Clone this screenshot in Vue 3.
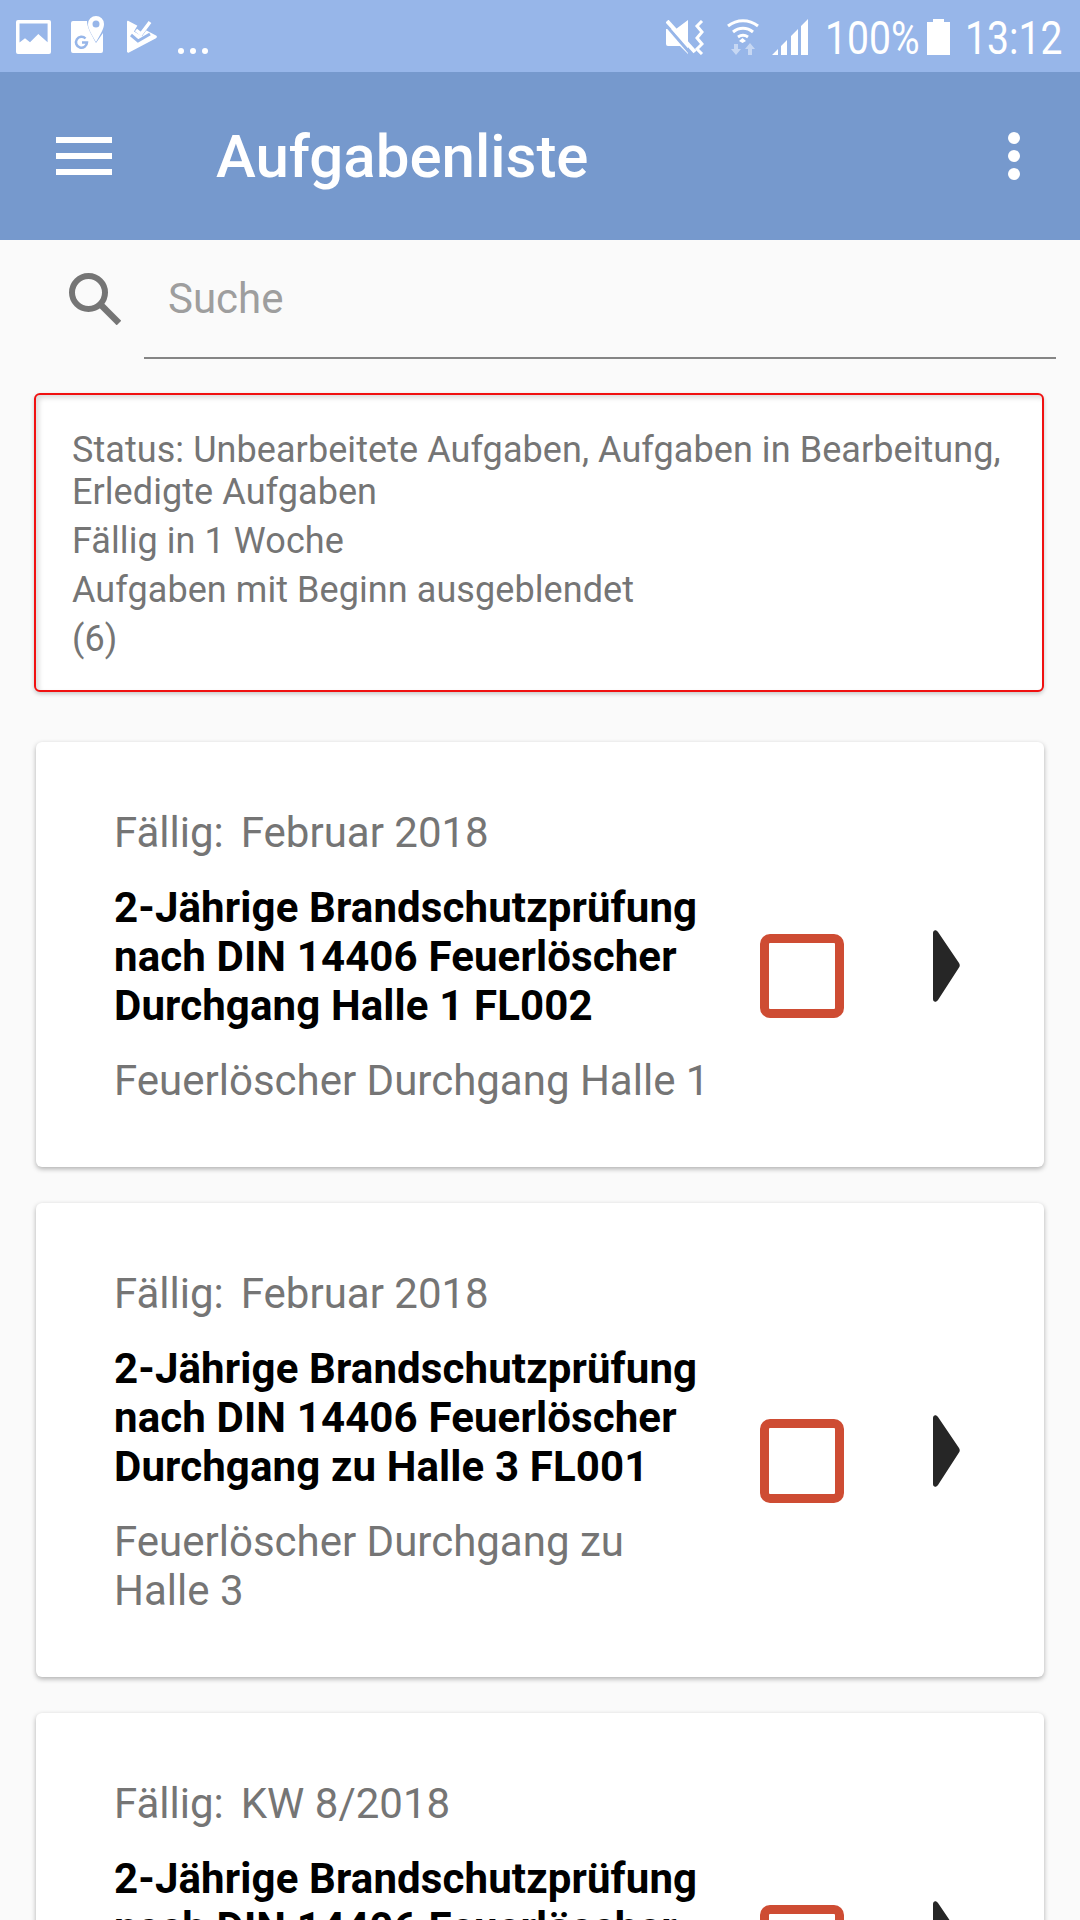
<script setup>
const notice = [
  'Status: Unbearbeitete Aufgaben, Aufgaben in Bearbeitung, Erledigte Aufgaben',
  'Fällig in 1 Woche',
  'Aufgaben mit Beginn ausgeblendet',
  '(6)',
]

const tasks = [
  {
    due: 'Februar 2018',
    title: '2-Jährige Brandschutzprüfung nach DIN 14406 Feuerlöscher Durchgang Halle 1 FL002',
    place: 'Feuerlöscher Durchgang Halle 1',
  },
  {
    due: 'Februar 2018',
    title: '2-Jährige Brandschutzprüfung nach DIN 14406 Feuerlöscher Durchgang zu Halle 3 FL001',
    place: 'Feuerlöscher Durchgang zu Halle 3',
  },
  {
    due: 'KW 8/2018',
    title: '2-Jährige Brandschutzprüfung nach DIN 14406 Feuerlöscher Durchgang Halle 2 FL003',
    place: 'Feuerlöscher Durchgang Halle 2',
  },
]
</script>

<template>
  <div class="screen">
    <div class="statusbar">
      <div class="status-left">
        <svg class="ic-image" width="35" height="34" viewBox="0 0 35 34">
          <path fill="#fff" fill-rule="evenodd" d="M2 0h31a2 2 0 0 1 2 2v30a2 2 0 0 1-2 2H2a2 2 0 0 1-2-2V2a2 2 0 0 1 2-2zm1.500 3.500v19L9 18.300l5 4L22.300 14l9.300 8.300V3.500z" />
        </svg>
        <svg class="ic-maps" width="34" height="37" viewBox="0 0 34 37">
          <path fill="#fff" d="M2 5h14c0 6 4 13 9 22l7-10v18a2 2 0 0 1-2 2H2a2 2 0 0 1-2-2V7a2 2 0 0 1 2-2z" />
          <path fill="#fff" fill-rule="evenodd" d="M25 0a8 8 0 0 1 8 8c0 5-4 11-8 18-4-7-8-13-8-18a8 8 0 0 1 8-8zm0 4.500a3.500 3.500 0 1 0 0 7 3.500 3.500 0 0 0 0-7z" />
          <path fill="none" stroke="#97b6e9" stroke-width="2.500" d="M14.500 22.500a5.500 5.500 0 1 0 1.500 4h-5" />
        </svg>
        <svg class="ic-tasks" width="30" height="33" viewBox="0 0 30 33">
          <path fill="#fff" d="M1.500 1L29 15.500c1.200.7 1.200 2 0 2.700L2 32.500c-1 .5-2 0-2-1V2c0-1 .7-1.500 1.500-1z" />
          <path fill="none" stroke="#97b6e9" stroke-width="3" d="M4 15l7 6 12-7" />
          <path fill="none" stroke="#97b6e9" stroke-width="8" d="M9 8l5 3 8-11" />
          <path fill="none" stroke="#fff" stroke-width="3.500" d="M9 10l5 4 9-12" />
        </svg>
        <span class="more-dots"><i></i><i></i><i></i></span>
      </div>
      <div class="status-right">
        <svg class="ic-mute" width="38" height="35" viewBox="0 0 38 35">
          <path fill="#fff" d="M0 9h10L22 0v34l-8-8H2a2 2 0 0 1-2-2z" />
          <path stroke="#97b6e9" stroke-width="3" d="M-2 3l26 30" />
          <path stroke="#fff" stroke-width="4" d="M1 1l28 31" />
          <path fill="none" stroke="#fff" stroke-width="3" d="M36 1l-5 5 5 6-5 6 5 6-5 5 5 5" />
        </svg>
        <svg class="ic-wifi" width="32" height="37" viewBox="0 0 32 37">
          <path fill="none" stroke="#fff" stroke-width="3" d="M1 8c9-7 21-7 30 0M6 14c6-5 14-5 20 0M11 19c3-2 7-2 10 0" />
          <path fill="#fff" d="M15.500 20l3.500 3-3.500 2-3.500-2z" />
          <path fill="#fff" opacity=".45" d="M7 26v5H4l5 6 5-6h-3v-5zM21 37v-6h-3l5-6 5 6h-3v6z" />
        </svg>
        <svg class="ic-signal" width="36" height="36" viewBox="0 0 36 36">
          <path fill="#fff" d="M0 36l6-6v6zM9 36V27l6-6v15zM19 36V17l7-7v26zM29 36V7l7-7v36z" />
        </svg>
        <span class="sb-text pct">100%</span>
        <svg class="ic-battery" width="23" height="36" viewBox="0 0 23 36">
          <path fill="#fff" d="M6 0h11v3h6v33H0V3h6z" />
        </svg>
        <span class="sb-text time">13:12</span>
      </div>
    </div>

    <header class="toolbar">
      <div class="menu-btn"><i></i><i></i><i></i></div>
      <h1 class="title">Aufgabenliste</h1>
      <div class="overflow-btn"><i></i><i></i><i></i></div>
    </header>

    <div class="search">
      <svg class="search-icon" width="52" height="52" viewBox="0 0 52 52">
        <circle cx="19.500" cy="19.500" r="16.500" fill="none" stroke="#757575" stroke-width="6" />
        <path stroke="#757575" stroke-width="6.500" d="M31 31l19 19" />
      </svg>
      <div class="search-input">Suche</div>
    </div>

    <div class="notice">
      <p v-for="line in notice" :key="line">{{ line }}</p>
    </div>

    <div class="cards">
      <div v-for="task in tasks" :key="task.title" class="card">
        <div class="card-body">
          <div class="due">Fällig:<span class="due-value">{{ task.due }}</span></div>
          <div class="task-title">{{ task.title }}</div>
          <div class="place">{{ task.place }}</div>
        </div>
        <div class="checkbox"></div>
        <svg class="arrow" width="27" height="72" viewBox="0 0 27 72">
          <path fill="#262626" d="M0 3c0-3 3-4 5-1l21 31c1 1.500 1 3 0 4.500L5 70c-2 3-5 2-5-1z" />
        </svg>
      </div>
    </div>
  </div>
</template>

<style>
html,
body {
  margin: 0;
  background: #fafafa;
}
</style>

<style scoped>
.screen {
  width: 1080px;
  height: 1920px;
  overflow: hidden;
  background: #fafafa;
  font-family: Roboto, "Liberation Sans", sans-serif;
}

.statusbar {
  height: 72px;
  background: #97b6e9;
  display: flex;
  justify-content: space-between;
  padding: 16px 20px 0 16px;
  box-sizing: border-box;
}

.status-left,
.status-right {
  display: flex;
  align-items: flex-start;
}

.ic-image {
  margin-top: 4px;
}

.ic-maps {
  margin-left: 20px;
}

.ic-tasks {
  margin-left: 22px;
  margin-top: 4px;
}

.more-dots {
  display: flex;
  gap: 6px;
  margin-left: 21px;
  margin-top: 32px;
}

.more-dots i {
  width: 6px;
  height: 6px;
  border-radius: 50%;
  background: #fff;
}

.ic-mute {
  margin-top: 4px;
}

.ic-wifi {
  margin-left: 23px;
  margin-top: 2px;
}

.ic-signal {
  margin-left: 13px;
  margin-top: 3px;
}

.sb-text {
  color: #fff;
  font-size: 46px;
  font-weight: 400;
  line-height: 36px;
  margin-top: 4px;
  white-space: nowrap;
  transform-origin: left center;
  transform: scaleX(0.85);
}

.pct {
  width: 92px;
  margin-left: 17px;
}

.ic-battery {
  margin-left: 10px;
  margin-top: 3px;
}

.time {
  width: 95px;
  margin-left: 15px;
}

.toolbar {
  height: 168px;
  background: #7699cd;
  display: flex;
  align-items: center;
  padding: 0 60px 0 56px;
  box-sizing: border-box;
}

.menu-btn {
  width: 56px;
  display: flex;
  flex-direction: column;
  gap: 10px;
}

.menu-btn i {
  height: 6px;
  background: #fff;
}

.title {
  flex: 1;
  margin: 0 0 0 104px;
  color: #fff;
  font-size: 60px;
  font-weight: 500;
}

.overflow-btn {
  display: flex;
  flex-direction: column;
  gap: 6px;
}

.overflow-btn i {
  width: 12px;
  height: 12px;
  border-radius: 50%;
  background: #fff;
}

.search {
  display: flex;
  align-items: flex-start;
  height: 119px;
  padding: 0 24px 0 69px;
}

.search-icon {
  margin-top: 33px;
  flex-shrink: 0;
}

.search-input {
  flex: 1;
  margin-left: 23px;
  height: 117px;
  padding-left: 24px;
  line-height: 118px;
  border-bottom: 2px solid #858585;
  color: #9e9e9e;
  font-size: 42px;
}

.notice {
  margin: 34px 36px 0 34px;
  padding: 34px 36px 30px;
  border: 2px solid #f01010;
  border-radius: 6px;
  background: #fff;
  box-shadow: inset 3px 3px 5px rgba(0, 0, 0, 0.14), 0 2px 4px rgba(0, 0, 0, 0.2);
  color: #757575;
  font-size: 36px;
  line-height: 42px;
  letter-spacing: 0.07px;
}

.notice p {
  margin: 0 0 7px;
}

.notice p:last-child {
  margin-bottom: 0;
}

.cards {
  display: flex;
  flex-direction: column;
  gap: 36px;
  margin: 50px 36px 0;
}

.card {
  display: flex;
  align-items: center;
  padding: 48px 0 6px 78px;
  border-radius: 6px;
  background: #fff;
  box-shadow: 0 2px 5px rgba(0, 0, 0, 0.3);
}

.card-body {
  width: 600px;
  flex-shrink: 0;
}

.due {
  margin-top: 18px;
  color: #757575;
  font-size: 42px;
  line-height: 50px;
}

.due-value {
  margin-left: 17px;
}

.task-title {
  margin-top: 25px;
  color: #000;
  font-size: 42px;
  font-weight: 700;
  line-height: 49px;
  letter-spacing: 0.13px;
}

.place {
  margin-top: 26px;
  margin-bottom: 56px;
  color: #757575;
  font-size: 42px;
  line-height: 49px;
}

.checkbox {
  width: 84px;
  height: 84px;
  margin-left: 46px;
  flex-shrink: 0;
  box-sizing: border-box;
  border: 9px solid #ce4c33;
  border-radius: 10px;
}

.arrow {
  margin-left: 89px;
  margin-top: -20px;
  flex-shrink: 0;
}
</style>
